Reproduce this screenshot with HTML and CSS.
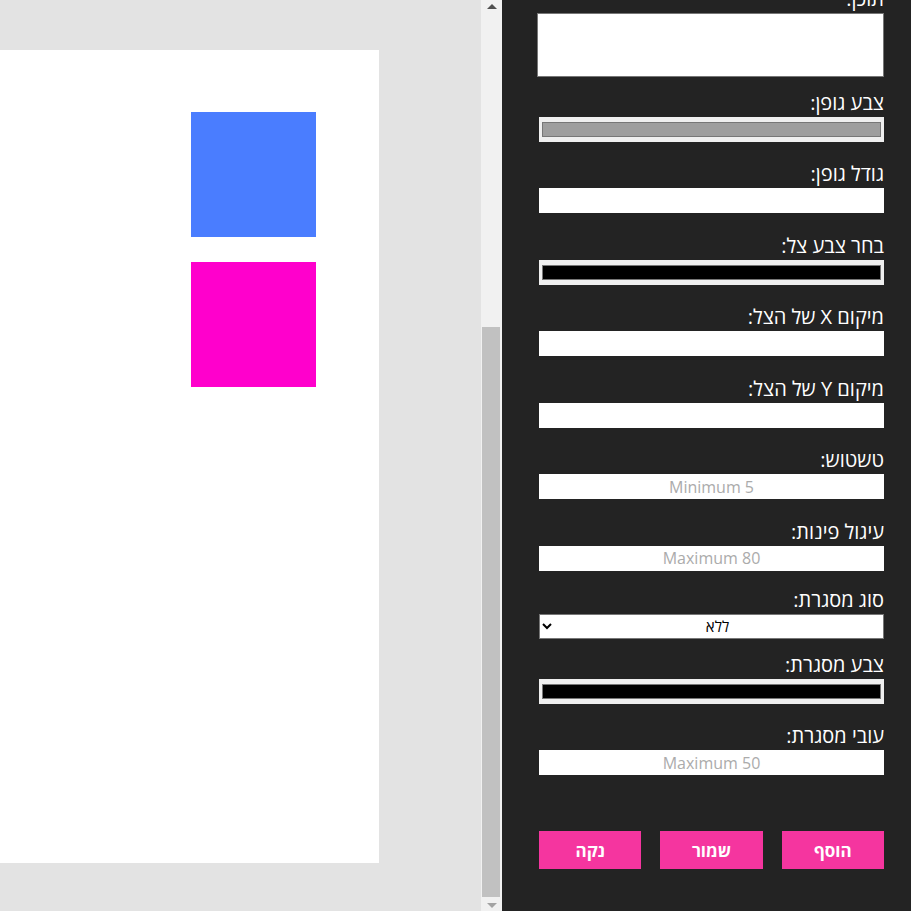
FILE: index.html
```html
<!DOCTYPE html>
<html lang="he">
<head>
<meta charset="utf-8">
<title>עורך צורות</title>
<link rel="stylesheet" href="styles.css">
</head>
<body>
<div class="app">
  <main class="stage">
    <div class="canvas">
      <div class="shape shape-blue" style="left:191px;top:62px;"></div>
      <div class="shape shape-pink" style="left:191px;top:212px;"></div>
    </div>
  </main>
  <aside class="sidebar" dir="rtl">
    <div class="scroller">
      <form class="form">
        <div class="field"><label class="label">רוחב:</label><input class="text" type="text"></div>
        <div class="field"><label class="label">גובה:</label><input class="text" type="text"></div>
        <div class="field"><label class="label">מיקום X:</label><input class="text" type="text"></div>
        <div class="field"><label class="label">מיקום Y:</label><input class="text" type="text"></div>
        <div class="field"><label class="label">צבע רקע:</label><input class="color" type="color" value="#ffffff"></div>
        <div class="field"><label class="label">שקיפות:</label><input class="text" type="text"></div>
        <div class="field field-area"><label class="label">תוכן:</label><textarea class="area"></textarea></div>
        <div class="field"><label class="label">צבע גופן:</label><input class="color" type="color" value="#9e9e9e"></div>
        <div class="field"><label class="label">גודל גופן:</label><input class="text" type="text"></div>
        <div class="field"><label class="label">בחר צבע צל:</label><input class="color" type="color" value="#000000"></div>
        <div class="field"><label class="label">מיקום X של הצל:</label><input class="text" type="text"></div>
        <div class="field"><label class="label">מיקום Y של הצל:</label><input class="text" type="text"></div>
        <div class="field"><label class="label">טשטוש:</label><input class="text" type="text" placeholder="Minimum 5"></div>
        <div class="field"><label class="label">עיגול פינות:</label><input class="text" type="text" placeholder="Maximum 80"></div>
        <div class="field field-select"><label class="label">סוג מסגרת:</label>
          <select class="select"><option>ללא</option><option>רציפה</option><option>מקווקוות</option><option>מנוקדת</option></select>
        </div>
        <div class="field"><label class="label">צבע מסגרת:</label><input class="color" type="color" value="#000000"></div>
        <div class="field field-last"><label class="label">עובי מסגרת:</label><input class="text" type="text" placeholder="Maximum 50"></div>
        <div class="actions">
          <button class="btn" type="button">הוסף</button>
          <button class="btn" type="button">שמור</button>
          <button class="btn" type="button">נקה</button>
        </div>
      </form>
    </div>
    <div class="scrollbar" aria-hidden="true">
      <div class="sb-btn sb-up"><span class="arrow-up"></span></div>
      <div class="sb-track"><div class="sb-thumb"></div></div>
      <div class="sb-btn sb-down"><span class="arrow-down"></span></div>
    </div>
  </aside>
</div>
</body>
</html>
```
FILE: styles.css
```css
* { box-sizing: border-box; }
html, body { margin: 0; height: 100%; }
body {
  font-family: "Open Sans", "Liberation Sans", "DejaVu Sans", sans-serif;
  overflow: hidden;
}
.app {
  display: flex;
  height: 911px;
}
.stage {
  width: 481px;
  flex: none;
  background: #e3e3e3;
  padding-top: 50px;
}
.canvas {
  position: relative;
  width: 379px;
  height: 813px;
  background: #ffffff;
}
.shape {
  position: absolute;
  width: 125px;
  height: 125px;
}
.shape-blue { background: #4a7dff; }
.shape-pink { background: #ff00cc; }

.sidebar {
  flex: 1;
  display: flex;
  flex-direction: row;
  direction: rtl;
  min-width: 0;
}
.scroller {
  flex: 1;
  background: #232323;
  overflow-y: auto;
  scrollbar-width: none;
  display: flex;
  flex-direction: column-reverse;
}
.scrollbar {
  width: 21px;
  flex: none;
  background: #f1f1f1;
  display: flex;
  flex-direction: column;
}
.sb-btn {
  display: flex;
  justify-content: center;
  flex: none;
}
.sb-up { height: 17px; padding-top: 4px; }
.sb-down { height: 14px; padding-top: 6px; }
.arrow-up {
  width: 0; height: 0;
  border-left: 5px solid transparent;
  border-right: 5px solid transparent;
  border-bottom: 5px solid #505050;
}
.arrow-down {
  width: 0; height: 0;
  border-left: 5px solid transparent;
  border-right: 5px solid transparent;
  border-top: 5px solid #a3a3a3;
}
.sb-track {
  flex: 1;
  display: flex;
  flex-direction: column;
  justify-content: flex-end;
}
.sb-thumb {
  height: 570px;
  margin: 0 2px 0 1px;
  background: #c1c1c1;
}

.form {
  display: block;
  flex: none;
  padding: 50px 27px 42px 37px;
}
.field { margin-bottom: 20.5px; }
.field-area { margin-bottom: 14px; }
.field-select { margin-top: -3.5px; margin-bottom: 14px; }
.field-last { margin-bottom: 56px; }
.label {
  display: block;
  height: 24px;
  margin-bottom: 2px;
  font-size: 20px;
  line-height: 24px;
  font-weight: 500;
  color: #ffffff;
  white-space: nowrap;
}
.text {
  display: block;
  width: 345px;
  height: 25px;
  border: 0;
  padding: 0 4px;
  background: #ffffff;
  font-family: inherit;
  font-size: 16px;
  text-align: center;
  color: #000;
  outline: none;
}
.text::placeholder { color: #ababab; }
.area {
  display: block;
  width: 347px;
  height: 64px;
  border: 1px solid #767676;
  background: #fff;
  resize: none;
  font-family: inherit;
  margin: 0;
}
.color {
  display: block;
  width: 345px;
  height: 25px;
  border: 0;
  padding: 0;
  margin: 0;
  background: #efefef;
  -webkit-appearance: none;
  appearance: none;
}
.color::-webkit-color-swatch-wrapper { padding: 5px 3px; }
.color::-webkit-color-swatch { border: 1px solid #777777; border-radius: 0; }
.select {
  display: block;
  width: 345px;
  height: 25px;
  margin: 0;
  border: 1px solid #767676;
  border-radius: 0;
  background: #ffffff;
  font-family: inherit;
  font-size: 15px;
  color: #000;
  text-align: center;
  text-align-last: center;
}
.actions {
  display: flex;
  gap: 19px;
}
.btn {
  flex: 1;
  height: 38px;
  border: 0;
  background: #f5359f;
  color: #ffffff;
  font-family: inherit;
  font-size: 17px;
  font-weight: 700;
  cursor: pointer;
}
```
